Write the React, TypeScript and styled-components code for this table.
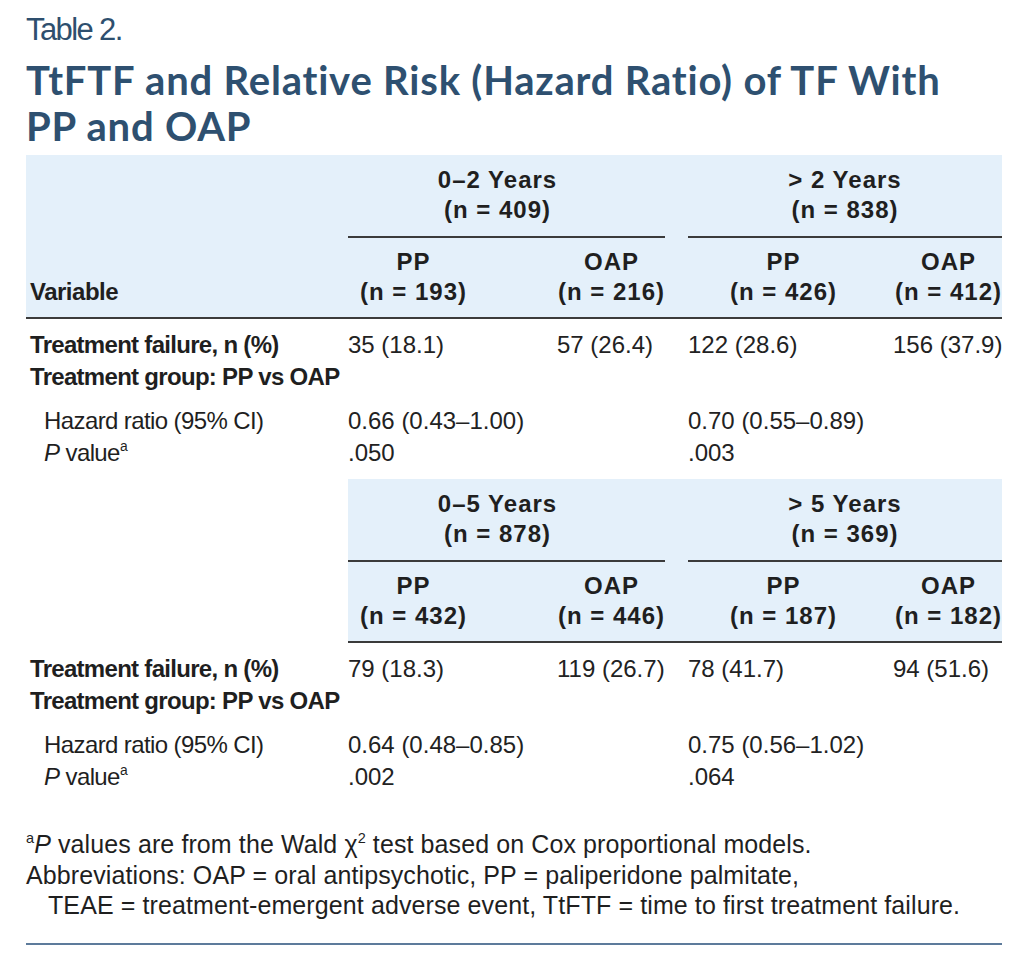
import styled, { createGlobalStyle } from 'styled-components';

const ARM_COLS = '209px 108px 23px 205px 109px';
const SANS = '"Liberation Sans", Arial, sans-serif';

const GlobalStyle = createGlobalStyle`
  body {
    margin: 0;
    background: #ffffff;
    color: #1f1f1f;
  }
`;

const Page = styled.div`
  width: 976px;
  padding: 10px 0 0 26px;
  font-family: ${SANS};
`;

const Caption = styled.div`
  font-size: 31px;
  line-height: 40px;
  color: #2e4f6e;
  letter-spacing: -1.6px;
`;

const Title = styled.h1`
  margin: 7px 0 6px;
  font-family: Lato, "Open Sans", sans-serif;
  font-weight: 700;
  font-size: 40px;
  line-height: 46px;
  letter-spacing: 0.8px;
  color: #2e5070;
`;

const HeadBand = styled.div<{ $inset?: boolean }>`
  display: grid;
  grid-template-columns: ${(p) => (p.$inset ? ARM_COLS : `322px ${ARM_COLS}`)};
  margin-left: ${(p) => (p.$inset ? '322px' : '0')};
  padding: 10px 0 10px;
  background: #e4f0fa;
  border-bottom: 2px solid #3b3b3b;
  font-weight: 700;
  font-size: 24px;
  line-height: 30px;
  letter-spacing: 1px;
`;

const VarHead = styled.div`
  grid-column: 1;
  grid-row: 1 / 3;
  align-self: end;
  padding-left: 4px;
  letter-spacing: -0.5px;
`;

const GroupHead = styled.div<{ $from: number; $pad?: number }>`
  grid-column: ${(p) => `${p.$from} / ${p.$from + 2}`};
  grid-row: 1;
  text-align: center;
  padding: 0 ${(p) => p.$pad || 0}px 11px 0;
  margin-bottom: 9px;
  border-bottom: 2px solid #3b3b3b;
`;

const ArmHead = styled.div<{ $col: number; $end?: boolean; $offset?: number }>`
  grid-column: ${(p) => p.$col};
  grid-row: 2;
  justify-self: ${(p) => (p.$end ? 'end' : 'start')};
  margin-left: ${(p) => p.$offset || 0}px;
  text-align: center;
  white-space: nowrap;
`;

const Body = styled.div`
  padding: 10px 0 0;
`;

const Row = styled.div<{ $gap?: number }>`
  display: grid;
  grid-template-columns: 322px ${ARM_COLS};
  margin-top: ${(p) => p.$gap || 0}px;
  line-height: 32px;
`;

const Label = styled.div<{ $sub?: boolean }>`
  grid-column: 1;
  padding-left: ${(p) => (p.$sub ? 18 : 4)}px;
  font-size: 24px;
  font-weight: ${(p) => (p.$sub ? 400 : 700)};
  letter-spacing: ${(p) => (p.$sub ? -0.6 : -0.7)}px;
  white-space: nowrap;
`;

const Value = styled.div<{ $col: number }>`
  grid-column: ${(p) => p.$col};
  font-size: 24px;
  color: #222;
  white-space: nowrap;
`;

const Sup = styled.sup`
  font-size: 0.58em;
  line-height: 0;
  vertical-align: 0.7em;
`;

const Notes = styled.div`
  margin-top: 36px;
  padding-bottom: 22px;
  border-bottom: 2px solid #5d7b9b;
  font-size: 25px;
  line-height: 30.5px;
  letter-spacing: 0.1px;
  color: #1f1f1f;
`;

const Note = styled.p<{ $hang?: boolean }>`
  margin: 0;
  padding-left: ${(p) => (p.$hang ? 22 : 0)}px;
  text-indent: ${(p) => (p.$hang ? -22 : 0)}px;
`;

const Spacer = styled.div`
  height: 10px;
`;

type Group = { label: string; n: string; pp: string; oap: string; ppOffset: number; pad?: number };
type Block = {
  groups: [Group, Group];
  failure: [string, string, string, string];
  hazard: [string, string];
  p: [string, string];
};

const blocks: Block[] = [
  {
    groups: [
      { label: '0–2 Years', n: '409', pp: '193', oap: '216', ppOffset: 12, pad: 18 },
      { label: '> 2 Years', n: '838', pp: '426', oap: '412', ppOffset: 42 },
    ],
    failure: ['35 (18.1)', '57 (26.4)', '122 (28.6)', '156 (37.9)'],
    hazard: ['0.66 (0.43–1.00)', '0.70 (0.55–0.89)'],
    p: ['.050', '.003'],
  },
  {
    groups: [
      { label: '0–5 Years', n: '878', pp: '432', oap: '446', ppOffset: 12, pad: 18 },
      { label: '> 5 Years', n: '369', pp: '187', oap: '182', ppOffset: 42 },
    ],
    failure: ['79 (18.3)', '119 (26.7)', '78 (41.7)', '94 (51.6)'],
    hazard: ['0.64 (0.48–0.85)', '0.75 (0.56–1.02)'],
    p: ['.002', '.064'],
  },
];

const n = (v: string) => `(n = ${v})`;

const Header = ({ block, inset }: { block: Block; inset?: boolean }) => {
  const base = inset ? 1 : 2;
  return (
    <HeadBand $inset={inset}>
      {!inset && <VarHead>Variable</VarHead>}
      {block.groups.map((g, i) => {
        const from = base + i * 3;
        return [
          <GroupHead key={`g${i}`} $from={from} $pad={g.pad}>
            {g.label}
            <br />
            {n(g.n)}
          </GroupHead>,
          <ArmHead key={`p${i}`} $col={from} $offset={g.ppOffset}>
            PP
            <br />
            {n(g.pp)}
          </ArmHead>,
          <ArmHead key={`o${i}`} $col={from + 1} $end>
            OAP
            <br />
            {n(g.oap)}
          </ArmHead>,
        ];
      })}
    </HeadBand>
  );
};

const Rows = ({ block }: { block: Block }) => (
  <Body>
    <Row>
      <Label>Treatment failure, n (%)</Label>
      <Value $col={2}>{block.failure[0]}</Value>
      <Value $col={3}>{block.failure[1]}</Value>
      <Value $col={5}>{block.failure[2]}</Value>
      <Value $col={6}>{block.failure[3]}</Value>
    </Row>
    <Row>
      <Label>Treatment group: PP vs OAP</Label>
    </Row>
    <Row $gap={12}>
      <Label $sub>Hazard ratio (95% CI)</Label>
      <Value $col={2}>{block.hazard[0]}</Value>
      <Value $col={5}>{block.hazard[1]}</Value>
    </Row>
    <Row>
      <Label $sub>
        <i>P</i> value<Sup>a</Sup>
      </Label>
      <Value $col={2}>{block.p[0]}</Value>
      <Value $col={5}>{block.p[1]}</Value>
    </Row>
  </Body>
);

export default function App() {
  return (
    <>
      <GlobalStyle />
      <Page>
        <Caption>Table 2.</Caption>
        <Title>
          TtFTF and Relative Risk (Hazard Ratio) of TF With
          <br />
          PP and OAP
        </Title>
        <Header block={blocks[0]} />
        <Rows block={blocks[0]} />
        <Spacer />
        <Header block={blocks[1]} inset />
        <Rows block={blocks[1]} />
        <Notes>
          <Note>
            <Sup>a</Sup>
            <i>P</i> values are from the Wald χ<Sup>2</Sup> test based on Cox proportional models.
          </Note>
          <Note $hang>
            Abbreviations: OAP = oral antipsychotic, PP = paliperidone palmitate,
            <br />
            TEAE = treatment-emergent adverse event, TtFTF = time to first treatment failure.
          </Note>
        </Notes>
      </Page>
    </>
  );
}
